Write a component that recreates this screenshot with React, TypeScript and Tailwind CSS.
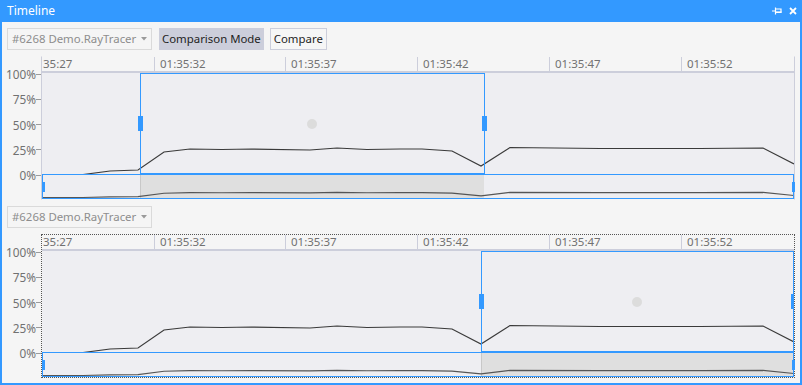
import React from 'react';

// cpu usage samples: [page x, percent]
const samples: [number, number][] = [
  [42, 0], [83, 0], [110, 3.5], [138, 4.5], [164, 22.5], [190, 25.5], [222, 25],
  [252, 25.5], [310, 24.5], [337, 26.5], [367, 25], [400, 25.5], [422, 25.5],
  [452, 23.5], [481, 8.5], [510, 27], [600, 26], [700, 26], [763, 26.5], [794, 10.5],
];

const X0 = 42;

function Dropdown() {
  return (
    <div className="flex h-[22px] w-[145px] items-center justify-between whitespace-nowrap border border-[#dadada] bg-[#f5f5f5] pl-[4px] pr-[4px] text-[#8d8d8d]">
      <span>#6268 Demo.RayTracer</span>
      <svg width="6" height="4" viewBox="0 0 6 4">
        <path d="M0 0h6L3 3.5z" fill="#9a9a9a" />
      </svg>
    </div>
  );
}

function Timeline({ sel, focused }: { sel: [number, number]; focused?: boolean }) {
  const [a, b] = sel;
  const plotPts = samples.map(([x, v]) => `${x - X0},${101.5 - v}`).join(' ');
  const stripPts = samples.map(([x, v]) => `${x - X0},${23.5 - v * 0.19}`).join(' ');

  return (
    <div className="flex">
      {/* y axis */}
      <div className="w-[39px] pt-[10px]">
        <div className="flex h-[117px] flex-col justify-between">
          {['100%', '75%', '50%', '25%', '0%'].map((l) => (
            <div key={l} className="flex h-[16px] items-center justify-end">
              <span className="text-[11.8px] leading-[16px] text-[#717171]">{l}</span>
              <span className="h-px w-[5px] bg-[#9a9a9a]" />
            </div>
          ))}
        </div>
      </div>

      <div
        className={
          focused
            ? 'w-[754px] border border-dotted border-[#555555]'
            : 'w-[754px] border border-x-[#cccedb] border-y-transparent'
        }
      >
        {/* ruler */}
        <div className="flex h-[14px] whitespace-nowrap text-[11.5px] leading-[14px] text-[#717171]">
          <div className="w-[112px] pl-[1px]">35:27</div>
          <div className="w-[131px] border-l border-[#cccedb] pl-[5px]">01:35:32</div>
          <div className="w-[132px] border-l border-[#cccedb] pl-[5px]">01:35:37</div>
          <div className="w-[132px] border-l border-[#cccedb] pl-[5px]">01:35:42</div>
          <div className="w-[132px] border-l border-[#cccedb] pl-[5px]">01:35:47</div>
          <div className="flex-1 border-l border-[#cccedb] pl-[5px]">01:35:52</div>
        </div>
        <div className="h-[2px] bg-[#cccedb]" />

        {/* plot */}
        <div className="relative h-[101px] overflow-hidden bg-[#eeeef2]">
          <svg className="absolute inset-0" width="752" height="101">
            <polyline points={plotPts} fill="none" stroke="#3a3a3a" strokeWidth="1.2" />
          </svg>
          <div
            className="absolute top-0 h-[101px] border border-[#3399ff]"
            style={{ left: a - X0, width: b - a + 1 }}
          />
          <div className="absolute top-[43px] h-[15px] w-[5px] bg-[#3399ff]" style={{ left: a - X0 - 2 }} />
          <div className="absolute top-[43px] h-[15px] w-[5px] bg-[#3399ff]" style={{ left: b - X0 - 2 }} />
          <div
            className="absolute top-[46px] h-[10px] w-[10px] rounded-full bg-[#dcdcdc]"
            style={{ left: (a + b) / 2 - X0 - 5 }}
          />
        </div>

        {/* overview strip */}
        <div className="relative h-[25px] bg-[#eeeef2]">
          <svg className="absolute inset-0" width="752" height="25">
            <rect x={a - X0} y="0" width={b - a} height="25" fill="#dfdfdf" />
            <line x1={a - X0 + 0.5} y1="0" x2={a - X0 + 0.5} y2="25" stroke="#c8c8c8" />
            <polyline points={stripPts} fill="none" stroke="#555555" strokeWidth="1.2" />
          </svg>
          <div className="absolute inset-0 border border-[#3399ff]" />
          <div className="absolute left-0 top-[8px] h-[10px] w-[3px] bg-[#3399ff]" />
          <div className="absolute right-[-1px] top-[8px] h-[10px] w-[3px] bg-[#3399ff]" />
        </div>
      </div>
    </div>
  );
}

export default function App() {
  return (
    <div className="flex h-[385px] w-[802px] flex-col border-x-2 border-b-2 border-[#3399ff] bg-[#f5f5f5] font-['Noto_Sans',sans-serif] text-[11.4px]">
      <div className="flex h-[22px] shrink-0 items-center justify-between bg-[#3399ff] pl-[5px] pr-[3px] text-[12px] text-white">
        <span className="leading-[16px]">Timeline</span>
        <div className="flex items-center gap-[7px]">
          <svg width="10" height="8" viewBox="0 0 10 8">
            <path d="M0 4h3.5M3.5 0.5v7M3.5 2h5.5v3.5h-5.5" fill="none" stroke="white" strokeWidth="1.2" />
            <path d="M3.5 5h6" stroke="white" strokeWidth="1.2" />
          </svg>
          <svg width="8" height="8" viewBox="0 0 8 8">
            <path d="M1 1l6 6M7 1l-6 6" stroke="white" strokeWidth="1.8" />
          </svg>
        </div>
      </div>

      <div className="mt-[6px] flex items-center pl-[5px]">
        <Dropdown />
        <button className="ml-[7px] h-[22px] whitespace-nowrap bg-[#cccedb] px-[3px] text-[#1e1e1e]">Comparison Mode</button>
        <button className="ml-[6px] h-[22px] whitespace-nowrap border border-[#cccedb] bg-[#f6f6f6] px-[3px] text-[#1e1e1e]">Compare</button>
      </div>

      <div className="mt-[6px]">
        <Timeline sel={[140, 484]} />
      </div>

      <div className="mt-[6px] pl-[5px]">
        <Dropdown />
      </div>

      <div className="mt-[6px]">
        <Timeline sel={[481, 793]} focused />
      </div>
    </div>
  );
}
